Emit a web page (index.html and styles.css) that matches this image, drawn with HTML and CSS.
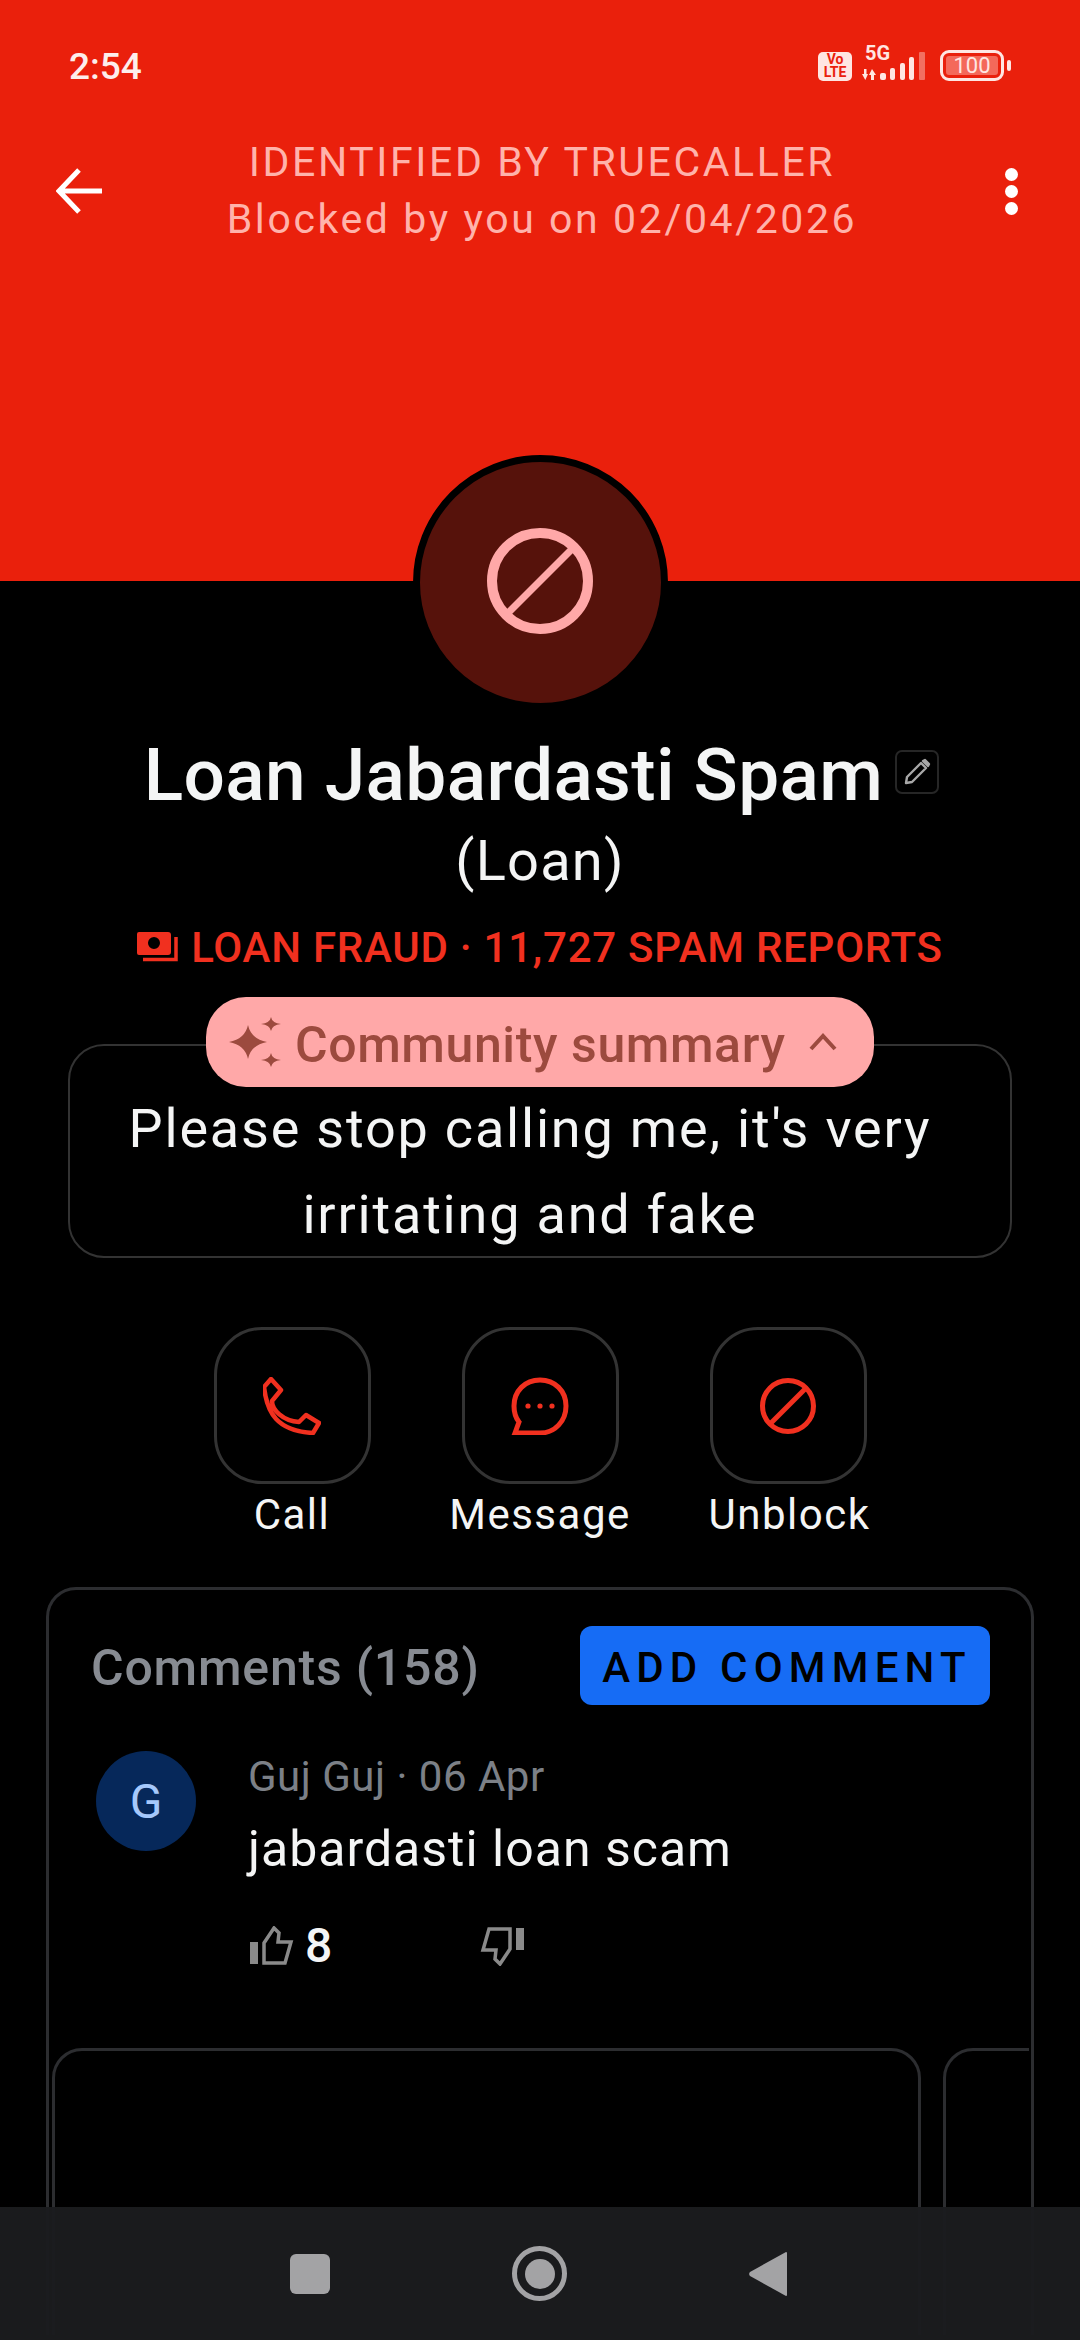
FILE: index.html
```html
<!DOCTYPE html>
<html lang="en">
<head>
  <meta charset="UTF-8">
  <title>Loan Jabardasti Spam</title>
  <link rel="stylesheet" href="styles.css">
</head>
<body>
  <div class="screen">
    <!-- Red header -->
    <header class="hero">
      <div class="status-bar">
        <span class="clock">2:54</span>
        <div class="status-icons">
          <div class="volte"><span>Vo</span><span>LTE</span></div>
          <svg class="signal" width="66" height="40" viewBox="0 -8 66 40">
            <text x="5" y="11" class="signal-text">5G</text>
            <path d="M4 20h2.500v5H8l-2.700 6L2 25h2zM12 20l4 6h-2v5h-3v-5H9z" fill="#ffe6e2"/>
            <rect x="20" y="24" width="6" height="7" rx="2" fill="#ffe6e2"/>
            <rect x="30" y="19" width="5" height="12" rx="2" fill="#ffe6e2"/>
            <rect x="40" y="14" width="5" height="17" rx="2" fill="#ffe6e2"/>
            <rect x="49" y="8" width="5" height="23" rx="2" fill="#ffe6e2"/>
            <rect x="59" y="3" width="6" height="28" rx="1" fill="#ffe6e2" opacity="0.4"/>
          </svg>
          <div class="battery">
            <div class="battery-body"><span>100</span></div>
            <div class="battery-nub"></div>
          </div>
        </div>
      </div>
      <div class="toolbar">
        <svg class="back" width="46" height="46" viewBox="0 0 46 46">
          <path d="M46 23H4M23 2L3 23l20 21" fill="none" stroke="#fff" stroke-width="5"/>
        </svg>
        <div class="toolbar-title">
          <div>IDENTIFIED BY TRUECALLER</div>
          <div>Blocked by you on 02/04/2026</div>
        </div>
        <div class="more"><i></i><i></i><i></i></div>
      </div>
    </header>

    <main class="profile">
      <div class="avatar">
        <svg width="108" height="108" viewBox="0 0 108 108">
          <circle cx="54" cy="54" r="48" fill="none" stroke="#ffa8a8" stroke-width="10"/>
          <path d="M20 88L88 20" stroke="#ffa8a8" stroke-width="7"/>
        </svg>
      </div>

      <div class="name-row">
        <h1>Loan Jabardasti Spam</h1>
        <span class="edit">
          <svg width="28" height="28" viewBox="0 0 28 28">
            <path d="M3 25l1-6L18 5l5 5L9 24zM20 3l2-1 4 4-1 2z" fill="none" stroke="#a8a8a8" stroke-width="2.4" stroke-linejoin="round"/>
          </svg>
        </span>
      </div>
      <div class="tag">(Loan)</div>

      <div class="fraud">
        <svg width="41" height="30" viewBox="0 0 41 30">
          <path fill-rule="evenodd" d="M2 0h29a3 3 0 0 1 3 3v17a3 3 0 0 1-3 3H2a2 2 0 0 1-2-2V2a2 2 0 0 1 2-2zm15 5a6 6 0 1 0 0 12 6 6 0 0 0 0-12z" fill="#f1301f"/>
          <path d="M6 27.500h33V5" fill="none" stroke="#f1301f" stroke-width="3.500"/>
        </svg>
        <span>LOAN FRAUD · 11,727 SPAM REPORTS</span>
      </div>

      <div class="pill">
        <svg width="52" height="50" viewBox="0 0 52 50">
          <path d="M19 8q3 14 19 17Q22 28 19 42 16 28 0 25 16 22 19 8zM42 0q1 6 10 7-9 1-10 7-1-6-10-7 9-1 10-7zM42 36q1 6 10 7-9 1-10 7-1-6-10-7 9-1 10-7z" fill="#9c4a3e"/>
        </svg>
        <span>Community summary</span>
        <svg class="chevron" width="28" height="18" viewBox="0 0 28 18">
          <path d="M2 16L14 3l12 13" fill="none" stroke="#9c4a3e" stroke-width="4"/>
        </svg>
      </div>
      <div class="summary">Please stop calling me, it's very irritating and fake</div>

      <div class="actions">
        <div class="action">
          <div class="action-btn">
            <svg width="58" height="58" viewBox="0 0 58 58">
              <path d="M8 2L18 13 9 24C9 33 20 44 36 45L43 38 56 46 50 56C14 54 4 36 1 10Z" fill="none" stroke="#f1301f" stroke-width="4.500" stroke-linejoin="round"/>
            </svg>
          </div>
          <span>Call</span>
        </div>
        <div class="action">
          <div class="action-btn">
            <svg width="58" height="58" viewBox="0 0 58 58">
              <path d="M4 56L8 45C4 40 3 35 3 29 3 14 14 3 29 3 44 3 55 14 55 29 55 44 44 56 29 56Z" fill="none" stroke="#f1301f" stroke-width="5"/>
              <circle cx="17" cy="29" r="2.600" fill="#f1301f"/>
              <circle cx="29" cy="29" r="2.600" fill="#f1301f"/>
              <circle cx="41" cy="29" r="2.600" fill="#f1301f"/>
            </svg>
          </div>
          <span>Message</span>
        </div>
        <div class="action">
          <div class="action-btn">
            <svg width="58" height="58" viewBox="0 0 58 58">
              <circle cx="29" cy="29" r="25.500" fill="none" stroke="#f1301f" stroke-width="5"/>
              <path d="M11 47L47 11" stroke="#f1301f" stroke-width="5"/>
            </svg>
          </div>
          <span>Unblock</span>
        </div>
      </div>

      <!-- Comments -->
      <section class="comments">
        <div class="comments-head">
          <h2>Comments (158)</h2>
          <button class="add-btn">ADD COMMENT</button>
        </div>
        <div class="comment">
          <div class="comment-avatar">G</div>
          <div class="comment-body">
            <div class="comment-meta">Guj Guj · 06 Apr</div>
            <div class="comment-text">jabardasti loan scam</div>
            <div class="votes">
              <svg width="44" height="40" viewBox="0 0 44 40">
                <path d="M0 16h8v22H0z" fill="#8a8a8a"/>
                <path d="M14 17L24 2l5 5-1 9h13l-6 21H14z" fill="none" stroke="#8a8a8a" stroke-width="3.500"/>
              </svg>
              <span class="vote-count">8</span>
              <svg class="dislike" width="44" height="40" viewBox="0 0 44 40">
                <path d="M0 16h8v22H0z" fill="#8a8a8a"/>
                <path d="M14 17L24 2l5 5-1 9h13l-6 21H14z" fill="none" stroke="#8a8a8a" stroke-width="3.500"/>
              </svg>
            </div>
          </div>
        </div>
        <div class="cards">
          <div class="card"></div>
          <div class="card"></div>
        </div>
      </section>
    </main>

    <!-- Android nav bar -->
    <nav class="nav-bar">
      <div class="nav-square"></div>
      <div class="nav-home"><i></i></div>
      <svg width="38" height="46" viewBox="0 0 38 46">
        <path d="M37 1a1 1 0 0 1 1 1v42a1 1 0 0 1-1 1L1 25a3 3 0 0 1 0-4z" fill="#a3a3a5"/>
      </svg>
    </nav>
  </div>
</body>
</html>
```

FILE: styles.css
```css
/* Global Styles */
* {
  box-sizing: border-box;
}

body {
  margin: 0;
  background: #000;
  font-family: "Roboto", "Noto Sans", sans-serif;
  color: #f4f5f5;
}

.screen {
  position: relative;
  width: 1080px;
  height: 2340px;
  overflow: hidden;
}

/* Header */
.hero {
  height: 581px;
  background: #ea200c;
}

.status-bar {
  display: flex;
  justify-content: space-between;
  align-items: center;
  height: 102px;
  padding: 31px 69px 0;
}

.clock {
  font-size: 37px;
  font-weight: 500;
  color: #fdeeec;
}

.status-icons {
  display: flex;
  align-items: flex-end;
  margin-bottom: 11px;
}

.volte {
  display: flex;
  flex-direction: column;
  align-items: center;
  width: 34px;
  height: 29px;
  margin-right: 8px;
  padding-top: 1px;
  background: #ffe6e2;
  border-radius: 5px;
  font-size: 14px;
  font-weight: 700;
  line-height: 13px;
  color: #ea200c;
}

.signal-text {
  font-family: "Roboto", sans-serif;
  font-size: 20px;
  font-weight: 700;
  fill: #ffe6e2;
}

.battery {
  display: flex;
  align-items: center;
  margin-left: 14px;
}

.battery-body {
  width: 64px;
  height: 31px;
  padding: 3px;
  border: 3px solid #ffe6e2;
  border-radius: 9px;
}

.battery-body span {
  display: block;
  height: 100%;
  background: #f4695a;
  border-radius: 3px;
  font-size: 22px;
  line-height: 19px;
  text-align: center;
  color: #ffe6e2;
}

.battery-nub {
  width: 4px;
  height: 11px;
  margin-left: 3px;
  background: #ffe6e2;
  border-radius: 2px;
}

.toolbar {
  display: flex;
  align-items: center;
  height: 112px;
  margin-top: 33px;
  padding: 0 62px 0 56px;
}

.toolbar-title {
  flex: 1;
  padding-left: 10px;
  font-size: 41px;
  line-height: 57px;
  letter-spacing: 2.6px;
  text-align: center;
  color: #ffb3ab;
}

.more {
  display: flex;
  flex-direction: column;
  align-items: flex-end;
  gap: 4px;
  width: 46px;
}

.more i {
  display: block;
  width: 13px;
  height: 13px;
  background: #fff;
  border-radius: 50%;
}

/* Profile */
.profile {
  display: flex;
  flex-direction: column;
  align-items: center;
  height: 1759px;
}

.avatar {
  display: flex;
  justify-content: center;
  align-items: center;
  width: 255px;
  height: 255px;
  margin-top: -126px;
  padding-bottom: 4px;
  background: #56120b;
  border: 7px solid #000;
  border-radius: 50%;
}

.name-row {
  display: flex;
  align-items: center;
  margin-top: 23px;
  padding-left: 3px;
}

h1 {
  margin: 0;
  font-size: 73px;
  font-weight: 500;
  line-height: 84px;
  letter-spacing: 0.4px;
}

.edit {
  display: flex;
  justify-content: center;
  align-items: center;
  width: 44px;
  height: 44px;
  margin: 0 0 6px 12px;
  border: 2px solid #262626;
  border-radius: 7px;
}

.tag {
  margin-top: 11px;
  font-size: 56px;
  line-height: 66px;
  letter-spacing: 1.2px;
}

.fraud {
  display: flex;
  align-items: center;
  gap: 13px;
  height: 50px;
  margin-top: 28px;
  font-size: 42px;
  font-weight: 500;
  letter-spacing: 0.75px;
  color: #f1301f;
}

.pill {
  position: relative;
  z-index: 1;
  display: flex;
  align-items: center;
  width: 668px;
  height: 90px;
  margin-top: 25px;
  padding: 0 37px 0 23px;
  background: #ffa8a8;
  border-radius: 40px;
  font-size: 50px;
  font-weight: 500;
  letter-spacing: 0.6px;
  color: #9c4a3e;
}

.pill span {
  flex: 1;
  margin-left: 14px;
  padding-top: 5px;
}

.summary {
  width: 944px;
  height: 214px;
  margin-top: -43px;
  padding: 40px 50px 0 30px;
  border: 2px solid #333;
  border-radius: 36px;
  font-size: 54px;
  line-height: 86px;
  letter-spacing: 1.8px;
  text-align: center;
}

/* Action buttons */
.actions {
  display: flex;
  margin-top: 69px;
}

.action {
  display: flex;
  flex-direction: column;
  align-items: center;
  width: 248px;
  font-size: 42px;
  letter-spacing: 1.5px;
}

.action:last-child span {
  margin-left: 3px;
}

.action-btn {
  display: flex;
  justify-content: center;
  align-items: center;
  width: 157px;
  height: 157px;
  margin-bottom: 6px;
  border: 3px solid #333;
  border-radius: 48px;
}

/* Comments */
.comments {
  display: flex;
  flex-direction: column;
  width: 988px;
  height: 748px;
  margin-top: 48px;
  padding: 36px 2px 0;
  border: 3px solid #2c2d30;
  border-bottom: none;
  border-radius: 30px 30px 0 0;
}

.comments-head {
  display: flex;
  justify-content: space-between;
  align-items: center;
  padding: 0 39px 0 40px;
}

h2 {
  margin: 0;
  padding-top: 5px;
  font-size: 50px;
  font-weight: 500;
  letter-spacing: 0.8px;
  color: #878b92;
}

.add-btn {
  width: 410px;
  height: 79px;
  padding: 3px 0 0 4px;
  background: #166cf5;
  border: none;
  border-radius: 12px;
  font-family: inherit;
  font-size: 42px;
  font-weight: 500;
  letter-spacing: 6.2px;
  color: #000;
}

.comment {
  display: flex;
  gap: 52px;
  margin-top: 46px;
  padding-left: 45px;
}

.comment-avatar {
  display: flex;
  justify-content: center;
  align-items: center;
  width: 100px;
  height: 100px;
  background: #06285a;
  border-radius: 50%;
  font-size: 48px;
  color: #a5c8fb;
}

.comment-meta {
  margin-top: 2px;
  font-size: 42px;
  line-height: 48px;
  letter-spacing: 0.5px;
  color: #7c8087;
}

.comment-text {
  margin-top: 18px;
  font-size: 50px;
  line-height: 60px;
  letter-spacing: 1px;
}

.votes {
  display: flex;
  align-items: center;
  margin-top: 38px;
  padding-left: 2px;
}

.vote-count {
  width: 186px;
  padding-left: 11px;
  font-size: 48px;
  font-weight: 500;
}

.dislike {
  transform: rotate(180deg);
}

.cards {
  flex: 1;
  display: flex;
  gap: 22px;
  margin: 74px 0 0 1px;
  overflow: hidden;
}

.card {
  flex: none;
  width: 869px;
  height: 500px;
  border: 3px solid #2c2d30;
  border-radius: 30px;
}

/* Nav bar lies over the page */
.nav-bar {
  position: absolute;
  left: 0;
  right: 0;
  bottom: 0;
  display: flex;
  justify-content: center;
  align-items: center;
  gap: 182px;
  height: 133px;
  padding: 0 3px 0 0;
  background: rgba(27, 28, 30, 0.96);
}

.nav-square {
  width: 40px;
  height: 40px;
  background: #a3a3a5;
  border-radius: 6px;
}

.nav-home {
  display: flex;
  justify-content: center;
  align-items: center;
  width: 55px;
  height: 55px;
  border: 5px solid #a3a3a5;
  border-radius: 50%;
}

.nav-home i {
  display: block;
  width: 30px;
  height: 30px;
  background: #a3a3a5;
  border-radius: 50%;
}
```
